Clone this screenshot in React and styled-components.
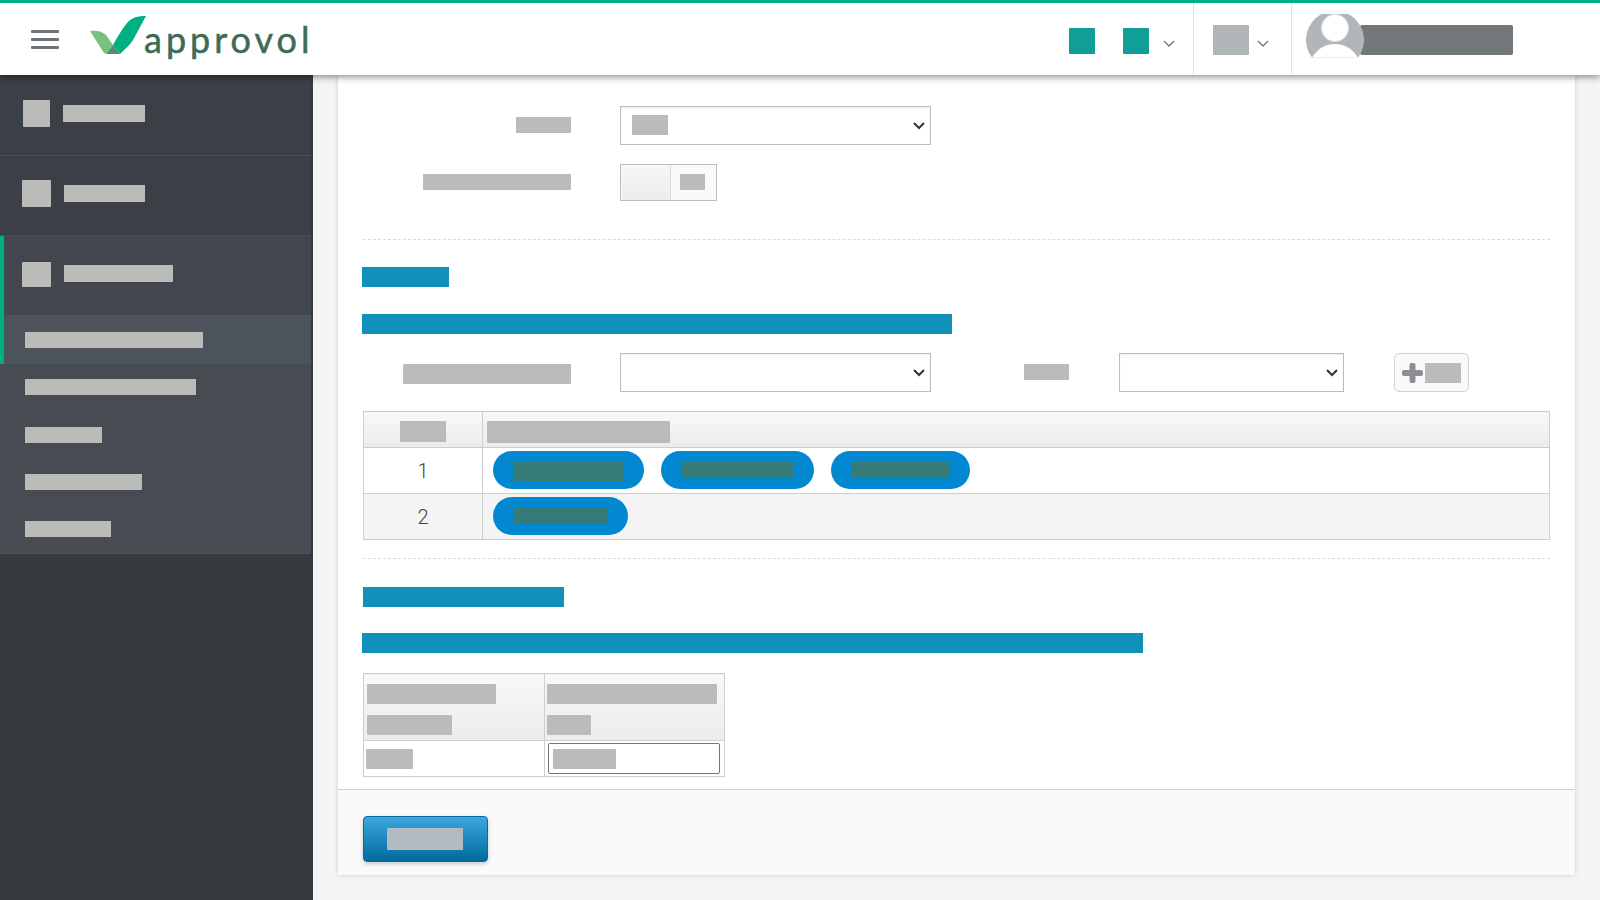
import React from 'react';
import styled, { createGlobalStyle } from 'styled-components';

const GlobalStyle = createGlobalStyle`
html, body {
    margin: 0;
    padding: 0;
    background: #f4f4f4;
    font-family: Roboto, "Liberation Sans", sans-serif;
}
* { box-sizing: border-box; }
`;

const Chevron = () => (
    <ChevronSvg width="12" height="7" viewBox="0 0 12 7">
        <polyline points="1,1 6,6 11,1" fill="none" stroke="#6f7478" strokeWidth="1.3" />
    </ChevronSvg>
);

const Logo = () => (
    <LogoSvg width="56" height="40" viewBox="90 15 56 40">
        <path d="M90 31 C96 30 102 31 106 35 L113 45 L107 54 L104 53 Z" fill="#78c17f" />
        <path d="M146 16 C138 16 132 17 127 23 C122 29 118 36 113 45 L120 54 C126 48 130 45 133 40 Z" fill="#00b085" />
        <path d="M113 45 L106.500 54 L120 54 Z" fill="#4f8d6f" />
    </LogoSvg>
);

const Avatar = () => (
    <AvatarSvg width="58" height="46" viewBox="0 0 58 46">
        <path d="M6 43.500 A29 29 0 1 1 52 43.500 Z" fill="#b1b6b8" />
        <circle cx="29" cy="14" r="13.500" fill="#fff" stroke="#e3e5e6" strokeWidth="1" />
        <path d="M6 43.500 C12 34 20 30 29 30 C38 30 46 34 52 43.500 Z" fill="#fff" />
    </AvatarSvg>
);

const PlusIcon = () => (
    <svg width="21" height="20" viewBox="0 0 21 20">
        <rect x="7.500" y="0" width="6" height="20" rx="2" fill="#8b8e92" />
        <rect x="0" y="7" width="21" height="6" rx="2" fill="#8b8e92" />
    </svg>
);

const Select = ({ width, children }) => (
    <SelectWrap $w={width}>
        <NativeSelect><option></option></NativeSelect>
        <SelectArrow width="12" height="8" viewBox="0 0 12 8">
            <polyline points="1,1 6,6 11,1" fill="none" stroke="#333" strokeWidth="2" />
        </SelectArrow>
        {children}
    </SelectWrap>
);

const App = () => {
    return (
        <Page>
            <GlobalStyle />
            <Header>
                <Burger><i /><i /><i /></Burger>
                <LogoWrap>
                    <Logo />
                    <LogoText>approvol</LogoText>
                </LogoWrap>
                <HeaderRight>
                    <FlagGroup>
                        <Bar $w={26} $h={26} $c="#0f9f98" $r={1} />
                        <Bar $w={26} $h={26} $c="#0f9f98" $r={1} />
                        <Chevron />
                    </FlagGroup>
                    <LangGroup>
                        <Bar $w={36} $h={30} $c="#b1b6b8" $r={1} />
                        <Chevron />
                    </LangGroup>
                    <UserGroup>
                        <Avatar />
                        <UserName $w={153} $h={30} $c="#72777a" $r={2} />
                    </UserGroup>
                </HeaderRight>
            </Header>

            <Body>
                <Sidebar>
                    <SideItem $tone="#3b4046" $height={81} $pad={23} $border>
                        <SideIcon $w={27} $h={27} />
                        <Bar $w={82} $h={17} />
                    </SideItem>
                    <SideItem $tone="#3b4046" $height={80} $pad={22} $border>
                        <SideIcon $w={29} $h={27} />
                        <Bar $w={81} $h={17} />
                    </SideItem>
                    <OpenGroup>
                        <SideItem $tone="#41474d" $height={79} $pad={18} $open>
                            <SideIcon $w={29} $h={25} $drop={2} />
                            <Bar $w={109} $h={17} />
                        </SideItem>
                        <SubList>
                            <SubItem $active><Bar $w={178} $h={16} /></SubItem>
                            <SubItem $top={15}><Bar $w={171} $h={16} /></SubItem>
                            <SubItem><Bar $w={77} $h={16} /></SubItem>
                            <SubItem><Bar $w={117} $h={16} /></SubItem>
                            <SubItem><Bar $w={86} $h={16} /></SubItem>
                        </SubList>
                    </OpenGroup>
                </Sidebar>

                <Main>
                    <Card>
                        <CardBody>
                            <FormRow>
                                <FormLabel><Bar $w={55} $h={16} /></FormLabel>
                                <Select width={311}>
                                    <SelectValue $w={36} $h={20} />
                                </Select>
                            </FormRow>
                            <FormRow $gap={19}>
                                <FormLabel><Bar $w={148} $h={16} /></FormLabel>
                                <Toggle>
                                    <ToggleKnob />
                                    <ToggleState><Bar $w={25} $h={16} /></ToggleState>
                                </Toggle>
                            </FormRow>

                            <Dashed $top={38} />

                            <Heading $w={87} $top={27} />
                            <Heading $w={590} $top={27} />

                            <FormRow $gap={19}>
                                <FormLabel $low><Bar $w={168} $h={20} $r={1} /></FormLabel>
                                <Select width={311} />
                                <SmallLabel><Bar $w={45} $h={16} /></SmallLabel>
                                <Select width={225} />
                                <AddButton>
                                    <PlusIcon />
                                    <Bar $w={36} $h={20} />
                                </AddButton>
                            </FormRow>

                            <GroupTable>
                                <colgroup>
                                    <col width="119" />
                                    <col />
                                </colgroup>
                                <thead>
                                    <tr>
                                        <HeadCell $center><InlineBar $w={46} $h={21} /></HeadCell>
                                        <HeadCell $pad={4}><InlineBar $w={183} $h={22} $r={1} /></HeadCell>
                                    </tr>
                                </thead>
                                <tbody>
                                    <tr>
                                        <NumCell>1</NumCell>
                                        <Cell>
                                            <Pills>
                                                <Pill $w={151}><Bar $w={110} $h={20} $c="#367b78" /></Pill>
                                                <Pill $w={153}><Bar $w={112} $h={16} $c="#367b78" /></Pill>
                                                <Pill $w={139}><Bar $w={98} $h={16} $c="#367b78" /></Pill>
                                            </Pills>
                                        </Cell>
                                    </tr>
                                    <tr>
                                        <NumCell $alt>2</NumCell>
                                        <Cell $alt>
                                            <Pills>
                                                <Pill $w={135}><Bar $w={94} $h={16} $c="#367b78" /></Pill>
                                            </Pills>
                                        </Cell>
                                    </tr>
                                </tbody>
                            </GroupTable>

                            <Dashed $top={18} />

                            <Heading $w={201} $top={28} $flush />
                            <Heading $w={781} $top={26} />

                            <LimitTable>
                                <colgroup>
                                    <col width="181" />
                                    <col width="180" />
                                </colgroup>
                                <thead>
                                    <tr>
                                        <WrapHead>
                                            <InlineBar $w={129} $h={20} $r={1} />
                                            <InlineBar $w={85} $h={20} $r={1} />
                                        </WrapHead>
                                        <WrapHead $left={2}>
                                            <InlineBar $w={170} $h={20} $r={1} />
                                            <InlineBar $w={44} $h={20} $r={1} />
                                        </WrapHead>
                                    </tr>
                                </thead>
                                <tbody>
                                    <tr>
                                        <LimitCell><Bar $w={47} $h={20} $r={1} /></LimitCell>
                                        <LimitCell>
                                            <AmountBox><Bar $w={63} $h={20} $r={1} /></AmountBox>
                                        </LimitCell>
                                    </tr>
                                </tbody>
                            </LimitTable>
                        </CardBody>
                        <Footer>
                            <SaveButton><Bar $w={76} $h={22} $c="#b2bac2" /></SaveButton>
                        </Footer>
                    </Card>
                </Main>
            </Body>
        </Page>
    );
};

const Page = styled.div`
display: flex;
flex-direction: column;
width: 1600px;
height: 900px;
overflow: hidden;
`;

// redacted text in the screenshot shows up as flat blocks
const Bar = styled.span`
display: block;
flex: none;
width: ${(p) => p.$w}px;
height: ${(p) => p.$h}px;
background: ${(p) => p.$c || '#bbbbb9'};
border-radius: ${(p) => p.$r || 0}px;
`;

const InlineBar = styled(Bar)`
margin: 0;
`;

const Header = styled.header`
position: relative;
z-index: 2;
display: flex;
align-items: center;
flex: none;
height: 75px;
padding-left: 31px;
background: #fff;
border-top: 3px solid #00b085;
box-shadow: 0 2px 7px rgba(0, 0, 0, 0.45);
`;

const Burger = styled.div`
display: flex;
flex-direction: column;
gap: 5px;
width: 28px;
i {
    display: block;
    height: 3px;
    background: #6f7478;
    border-radius: 1px;
}
`;

const LogoWrap = styled.div`
display: flex;
align-items: flex-start;
margin-left: 31px;
`;

const LogoSvg = styled.svg`
display: block;
flex: none;
`;

const LogoText = styled.span`
margin-left: -2px;
font-family: Lato, "Open Sans", sans-serif;
font-size: 36px;
line-height: 48px;
letter-spacing: 4px;
color: #3d6b55;
-webkit-text-stroke: 0.5px #3d6b55;
`;

const HeaderRight = styled.div`
display: flex;
align-self: stretch;
margin-left: auto;
`;

const ChevronSvg = styled.svg`
display: block;
flex: none;
margin-top: 6px;
`;

const FlagGroup = styled.div`
display: flex;
align-items: center;
gap: 28px;
padding: 4px 18px 0 0;
svg {
    margin-left: -14px;
    margin-top: 4px;
}
`;

const LangGroup = styled.div`
display: flex;
align-items: center;
gap: 8px;
padding: 2px 22px 0 19px;
border-left: 1px solid #e0e0e0;
`;

const UserGroup = styled.div`
display: flex;
align-items: center;
width: 309px;
padding-left: 14px;
border-left: 1px solid #e0e0e0;
`;

const AvatarSvg = styled.svg`
position: relative;
z-index: 1;
display: block;
flex: none;
margin-top: -4px;
`;

const UserName = styled(Bar)`
margin: 2px 0 0 -4px;
`;

const Body = styled.div`
display: flex;
flex: 1;
min-height: 0;
`;

const Sidebar = styled.aside`
flex: none;
width: 313px;
padding-right: 2px;
background: #363b40;
`;

const SideItem = styled.div`
display: flex;
align-items: center;
gap: 13px;
height: ${(p) => p.$height}px;
padding: 0 0 4px ${(p) => p.$pad}px;
background: ${(p) => p.$tone};
border-left: ${(p) => (p.$open ? '4px solid #00b085' : 'none')};
border-bottom: ${(p) => (p.$border ? '1px solid #4a4f56' : 'none')};
`;

const SideIcon = styled(Bar)`
margin-top: ${(p) => p.$drop || 0}px;
border-radius: 1px;
`;

const OpenGroup = styled.div`
border-bottom: 1px solid #50565c;
background: #464c52;
`;

const SubList = styled.div`
display: flex;
flex-direction: column;
padding-bottom: 1px;
`;

const SubItem = styled.div`
display: flex;
align-items: ${(p) => (p.$active ? 'center' : 'flex-start')};
height: ${(p) => (p.$active ? 49 : 47)}px;
padding-top: ${(p) => (p.$active ? 0 : p.$top || 16)}px;
padding-left: ${(p) => (p.$active ? 21 : 25)}px;
background: ${(p) => (p.$active ? '#4c535a' : 'transparent')};
border-left: ${(p) => (p.$active ? '4px solid #00b085' : 'none')};
`;

const Main = styled.main`
flex: 1;
min-width: 0;
padding: 0 25px;
`;

const Card = styled.section`
background: #fff;
box-shadow: 0 0 4px rgba(0, 0, 0, 0.18);
`;

const CardBody = styled.div`
height: 715px;
padding: 31px 25px 0;
border-bottom: 1px solid #cfcfcf;
`;

const FormRow = styled.div`
display: flex;
align-items: center;
margin-top: ${(p) => p.$gap || 0}px;
`;

const FormLabel = styled.div`
display: flex;
justify-content: flex-end;
flex: none;
width: 208px;
margin-right: 49px;
padding: ${(p) => (p.$low ? '2px 0 0' : '0 0 1px')};
`;

const SmallLabel = styled.div`
flex: none;
margin: 0 50px 0 93px;
padding-bottom: 1px;
`;

const SelectWrap = styled.div`
position: relative;
flex: none;
width: ${(p) => p.$w}px;
height: 39px;
`;

const NativeSelect = styled.select`
display: block;
width: 100%;
height: 100%;
padding: 0 6px;
appearance: none;
background: #fff;
border: 1px solid #bcbcbc;
border-radius: 0;
box-shadow: inset 0 1px 2px rgba(0, 0, 0, 0.07);
font-size: 15px;
`;

const SelectArrow = styled.svg`
position: absolute;
top: 16px;
right: 6px;
pointer-events: none;
`;

const SelectValue = styled(Bar)`
position: absolute;
top: 9px;
left: 12px;
`;

const Toggle = styled.div`
display: flex;
width: 97px;
height: 37px;
border: 1px solid #bcbcbc;
background: #fafafa;
`;

const ToggleKnob = styled.div`
width: 49px;
margin-left: 1px;
background: linear-gradient(#f7f7f7, #ececec);
border-right: 1px solid #d9d9d9;
`;

const ToggleState = styled.div`
display: flex;
align-items: center;
padding: 0 0 1px 9px;
`;

const Dashed = styled.hr`
margin: ${(p) => p.$top}px 0 0;
border: 0;
border-top: 1px dashed #dcdcdc;
`;

const Heading = styled.div`
width: ${(p) => p.$w}px;
height: 20px;
margin: ${(p) => p.$top}px 0 0 ${(p) => (p.$flush ? 0 : -1)}px;
background: #0f91ba;
`;

const AddButton = styled.button`
display: flex;
align-items: center;
gap: 2px;
width: 75px;
height: 39px;
margin-left: 50px;
padding: 0 0 0 7px;
background: #f9f9f9;
border: 1px solid #d4d4d4;
border-radius: 5px;
`;

const GroupTable = styled.table`
width: 1187px;
margin-top: 19px;
border-collapse: collapse;
table-layout: fixed;
`;

const HeadCell = styled.th`
height: 36px;
padding: 4px 0 0 ${(p) => p.$pad || 0}px;
background: linear-gradient(#f8f8f8, #ececec);
border: 1px solid #cdcdcd;
vertical-align: middle;
${InlineBar} {
    margin: ${(p) => (p.$center ? '0 auto' : '0')};
}
`;

const NumCell = styled.td`
height: 46px;
padding: 0;
background: ${(p) => (p.$alt ? '#f4f4f4' : '#fff')};
border: 1px solid #cdcdcd;
text-align: center;
font-size: 20px;
font-weight: 300;
color: #444;
`;

const Cell = styled.td`
padding: 0 0 2px 10px;
background: ${(p) => (p.$alt ? '#f4f4f4' : '#fff')};
border: 1px solid #cdcdcd;
`;

const Pills = styled.div`
display: flex;
gap: 17px;
`;

const Pill = styled.span`
display: flex;
justify-content: center;
width: ${(p) => p.$w}px;
height: 38px;
padding-top: 11px;
background: #0288d1;
border-radius: 19px;
`;

const LimitTable = styled.table`
width: 361px;
margin-top: 20px;
border-collapse: collapse;
table-layout: fixed;
`;

const WrapHead = styled.th`
height: 67px;
padding: 4px 0 0 ${(p) => p.$left || 3}px;
background: linear-gradient(#f8f8f8, #ececec);
border: 1px solid #cdcdcd;
vertical-align: middle;
${InlineBar} + ${InlineBar} {
    margin-top: 11px;
}
`;

const LimitCell = styled.td`
height: 36px;
padding: 0 0 0 2px;
background: #fff;
border: 1px solid #cdcdcd;
`;

const AmountBox = styled.div`
display: flex;
align-items: center;
width: 172px;
height: 31px;
margin-left: 1px;
padding-left: 4px;
border: 1px solid #767676;
border-radius: 2px;
`;

const Footer = styled.div`
height: 85px;
padding: 26px 25px 0;
background: #fafafa;
`;

const SaveButton = styled.button`
display: flex;
align-items: center;
justify-content: center;
width: 125px;
height: 46px;
padding: 0 2px 0 0;
background: linear-gradient(#3ca6de, #006b9c);
border: 1px solid #0a6a9e;
border-radius: 4px;
box-shadow: 0 2px 4px rgba(0, 0, 0, 0.2);
`;

export default App;
